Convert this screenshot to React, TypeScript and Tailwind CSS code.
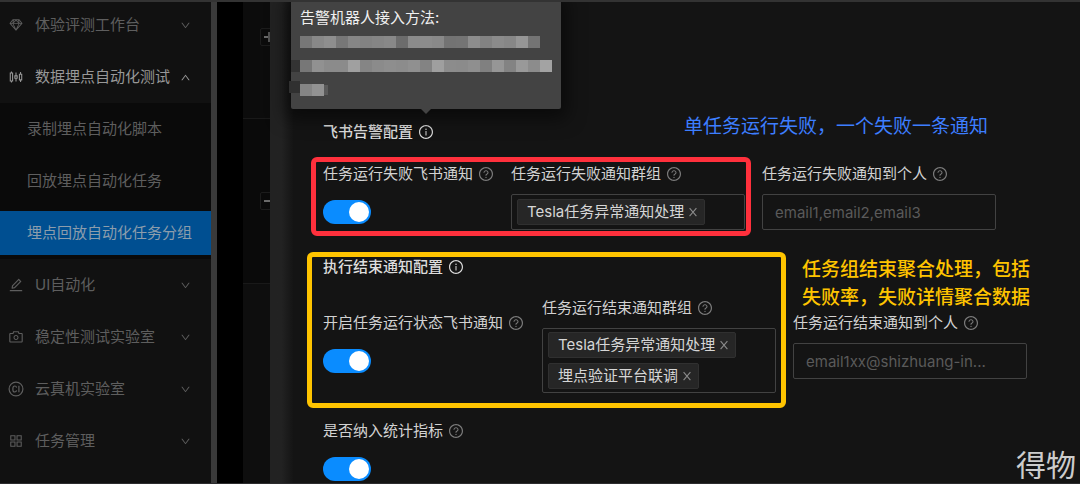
import type { ReactNode } from "react";
import {
  AiOutlineAppstore,
  AiOutlineCamera,
  AiOutlineDown,
  AiOutlineEdit,
  AiOutlineInfoCircle,
  AiOutlineQuestionCircle,
  AiOutlineSketch,
  AiOutlineSliders,
  AiOutlineUp,
} from "react-icons/ai";

const CiIcon = () => (
  <svg viewBox="0 0 16 16" width="16" height="16" fill="none" stroke="currentColor" strokeWidth="1.2">
    <circle cx="8" cy="8" r="6.9" />
    <path d="M8.6 6.6C8.4 5.6 7.7 5 6.8 5 5.6 5 4.9 5.9 4.9 7.3v1.4c0 1.4.7 2.3 1.9 2.3.9 0 1.6-.6 1.8-1.6M10.9 4.8v6.4" />
  </svg>
);

const MenuItem = ({
  icon,
  label,
  open,
}: {
  icon: ReactNode;
  label: string;
  open?: boolean;
}) => (
  <button
    className={`flex h-[52px] w-full items-center pr-5 pl-2 text-left ${
      open ? "text-[#989898]" : "text-[#5e5e5e]"
    }`}
  >
    <span className="flex w-[27px] items-center">{icon}</span>
    <span className="flex-1 whitespace-nowrap">{label}</span>
    {open ? <AiOutlineUp size={11} /> : <AiOutlineDown size={11} />}
  </button>
);

const SubItem = ({ label, active }: { label: string; active?: boolean }) => (
  <a
    href="#"
    className={`my-1 flex h-11 items-center pl-[27px] whitespace-nowrap ${
      active ? "bg-[#004f91] text-[#8c9dac]" : "text-[#5e5e5e]"
    }`}
  >
    {label}
  </a>
);

const Sidebar = () => (
  <aside className="w-[217px] shrink-0 overflow-hidden border-r-[6px] border-[#3a3a3a] bg-[#111111]">
    <nav className="-mt-[3px]">
      <MenuItem icon={<AiOutlineSketch size={16} />} label="体验评测工作台" />
      <MenuItem icon={<AiOutlineSliders size={16} />} label="数据埋点自动化测试" open />
      <div className="flex flex-col bg-[#0a0a0a]">
        <SubItem label="录制埋点自动化脚本" />
        <SubItem label="回放埋点自动化任务" />
        <SubItem label="埋点回放自动化任务分组" active />
      </div>
      <MenuItem icon={<AiOutlineEdit size={16} />} label="UI自动化" />
      <MenuItem icon={<AiOutlineCamera size={16} />} label="稳定性测试实验室" />
      <MenuItem icon={<CiIcon />} label="云真机实验室" />
      <MenuItem icon={<AiOutlineAppstore size={16} />} label="任务管理" />
    </nav>
  </aside>
);

// expand / collapse box of the table behind the drawer
const ExpandBox = ({ open }: { open?: boolean }) => (
  <button
    aria-label={open ? "收起" : "展开"}
    className="relative ml-[17px] block size-[18px] rounded-xs border border-[#1c1c1c]"
  >
    <span className="absolute top-[7px] left-[3px] h-0.5 w-2.5 bg-[#6a6a6a]" />
    {!open && <span className="absolute top-[3px] left-[7px] h-2.5 w-0.5 bg-[#505050]" />}
  </button>
);

const Backdrop = () => (
  <div className="flex w-[53px] shrink-0 bg-black pl-[26px]">
    <div className="flex flex-1 flex-col overflow-hidden bg-[#0c0c0c]">
      <div className="h-[117px] border-b border-[#191919] pt-[26px]">
        <ExpandBox />
      </div>
      <div className="h-[165px] border-b border-[#191919] bg-[#0a0a0a] pt-[73px]">
        <ExpandBox open />
      </div>
      <div className="flex-1 bg-[#0e0e0e]" />
    </div>
  </div>
);

const FieldLabel = ({ text, htmlFor }: { text: string; htmlFor?: string }) => (
  <label
    htmlFor={htmlFor}
    className="flex h-[22px] items-center gap-[5px] whitespace-nowrap text-[#d2d2d2]"
  >
    {text}
    <AiOutlineQuestionCircle size={16} className="text-[#7c7c7c]" />
  </label>
);

const Toggle = ({ id }: { id: string }) => (
  <div className="flex h-9 items-center">
    <input
      id={id}
      type="checkbox"
      role="switch"
      defaultChecked
      className="relative h-6 w-12 appearance-none rounded-full bg-[#3a3a3a] before:absolute before:top-0.5 before:left-0.5 before:size-5 before:rounded-full before:bg-white checked:bg-[#0a8cff] checked:before:left-[26px]"
    />
  </div>
);

const TagSelect = ({ tags, label }: { tags: string[]; label: string }) => (
  <div
    role="group"
    aria-label={label}
    className="flex min-h-9 w-[234px] flex-col items-start justify-center gap-[5px] rounded-xs border border-[#424242] px-[5px] py-[3px]"
  >
    {tags.map((tag) => (
      <span
        key={tag}
        className="flex h-[26px] items-center gap-1 rounded-xs border border-[#303030] bg-[#262626] pr-1.5 pl-[9px] whitespace-nowrap text-[#d6d6d6]"
      >
        {tag}
        <button aria-label={`移除${tag}`} className="text-[#8a8a8a]">
          <svg viewBox="0 0 10 10" width="10" height="10" stroke="currentColor" strokeWidth="1.1">
            <path d="M1.6 1.2l6.8 8M8.4 1.2l-6.8 8" />
          </svg>
        </button>
      </span>
    ))}
  </div>
);

const TextField = ({
  id,
  label,
  placeholder,
}: {
  id: string;
  label: string;
  placeholder: string;
}) => (
  <div className="flex flex-col gap-[9px]">
    <FieldLabel text={label} htmlFor={id} />
    <input
      id={id}
      type="text"
      placeholder={placeholder}
      className="h-9 w-[234px] rounded-xs border border-[#424242] bg-transparent px-3 text-ellipsis placeholder:text-[#5a5a5a]"
    />
  </div>
);

// shades of the pixelated lines in the tooltip, 12px per block
const mosaic = [
  ["#777777", "#888888", "#8e8e8e", "#777777", "#868686", "#828282", "#858585", "#888888", "#6c6c6c", "#8b8b8b", "#8c8c8c", "#898989", "#737373", "#747474", "#8d8d8d", "#828282", "#8b8b8b", "#878787", "#969696", "#747474"],
  ["#777777", "#919191", "#8b8b8b", "#8b8b8b", "#a0a0a0", "#858585", "#8b8b8b", "#8e8e8e", "#8c8c8c", "#909090", "#838383", "#9f9f9f", "#8c8c8c", "#8b8b8b", "#8f8f8f", "#808080", "#969696", "#838383", "#999999", "#8c8c8c", "#a3a3a3"],
  ["#858585", "#929292"],
];

const Tooltip = () => (
  <div
    role="tooltip"
    className="absolute bottom-full left-1/2 mb-[15px] w-[270px] -translate-x-1/2 rounded-xs bg-[#434343] px-[9px] py-[7px] font-normal text-[#f0f0f0] shadow-[0_4px_18px_6px_rgba(0,0,0,0.5)]"
  >
    <p className="leading-6">告警机器人接入方法:</p>
    {mosaic.map((row, i) => (
      <div key={i} className="flex h-6 items-center">
        {row.map((shade, j) => (
          <span key={j} className="h-3 w-3" style={{ background: shade }} />
        ))}
        {i === 2 && <span className="h-2.5 w-1 bg-[#5a5a5a]" />}
      </div>
    ))}
    <span className="absolute bottom-[37px] left-0 h-3 w-[9px] bg-[#333333]" />
    <span className="absolute bottom-4 -left-0.5 h-3 w-[11px] bg-[#303030]" />
    <span className="absolute top-full left-1/2 h-[5px] w-2.5 -translate-x-1/2 bg-[#434343] [clip-path:polygon(0_0,100%_0,50%_100%)]" />
  </div>
);

export default function App() {
  return (
    <div className="relative flex h-screen overflow-hidden border-t-2 border-b border-t-[#333333] border-b-[#2c2c2e] bg-[#141414] font-['Inter','Noto_Sans_CJK_SC',sans-serif] text-[15px] leading-[22px]">
      <Sidebar />
      <Backdrop />
      <div className="w-[23px] shrink-0 bg-linear-to-r from-[#222222] from-50% to-[#151515]" />

      <main className="flex min-w-0 flex-1 flex-col pt-[111px]">
        <div className="flex items-start pl-[30px]">
          <h2 className="mt-2 flex w-[361px] items-center gap-[5px] font-medium text-[#dcdcdc]">
            飞书告警配置
            <span className="relative">
              <AiOutlineInfoCircle size={16} />
              <Tooltip />
            </span>
          </h2>
          <p className="text-[19px] leading-7 whitespace-nowrap text-[#3d7eff]">
            单任务运行失败，一个失败一条通知
          </p>
        </div>

        <section className="mt-3.5 flex items-start gap-[11px] pl-[18px]">
          <div className="flex rounded-md border-5 border-[#ff303c] py-px pr-px pl-[7px]">
            <div className="flex w-[188px] flex-col gap-[9px]">
              <FieldLabel text="任务运行失败飞书通知" htmlFor="fail-notice" />
              <Toggle id="fail-notice" />
            </div>
            <div className="flex flex-col gap-[9px]">
              <FieldLabel text="任务运行失败通知群组" />
              <TagSelect label="任务运行失败通知群组" tags={["Tesla任务异常通知处理"]} />
            </div>
          </div>
          <div className="pt-1.5">
            <TextField
              id="fail-email"
              label="任务运行失败通知到个人"
              placeholder="email1,email2,email3"
            />
          </div>
        </section>

        <section className="mt-4 flex items-start gap-[7px] pl-3.5">
          <div className="rounded-md border-5 border-[#ffc400] pr-[5px] pb-2.5 pl-[11px]">
            <h2 className="flex h-5 items-center gap-[5px] font-medium text-[#dcdcdc]">
              执行结束通知配置
              <AiOutlineInfoCircle size={16} />
            </h2>
            <div className="mt-5 flex items-center">
              <div className="flex w-[219px] flex-col gap-[9px]">
                <FieldLabel text="开启任务运行状态飞书通知" htmlFor="end-notice" />
                <Toggle id="end-notice" />
              </div>
              <div className="flex flex-col gap-[9px]">
                <FieldLabel text="任务运行结束通知群组" />
                <TagSelect
                  label="任务运行结束通知群组"
                  tags={["Tesla任务异常通知处理", "埋点验证平台联调"]}
                />
              </div>
            </div>
          </div>
          <div className="pt-1">
            <p className="ml-[9px] text-[19px] leading-7 font-medium whitespace-nowrap text-[#ffc400]">
              任务组结束聚合处理，包括
              <br />
              失败率，失败详情聚合数据
            </p>
            <TextField
              id="end-email"
              label="任务运行结束通知到个人"
              placeholder="email1xx@shizhuang-in..."
            />
          </div>
        </section>

        <section className="mt-3 flex flex-col gap-[9px] pl-[30px]">
          <FieldLabel text="是否纳入统计指标" htmlFor="in-stats" />
          <Toggle id="in-stats" />
        </section>
      </main>

      <span className="absolute right-1 bottom-0 text-[30px] leading-9 text-[#cccccc]">得物</span>
    </div>
  );
}
